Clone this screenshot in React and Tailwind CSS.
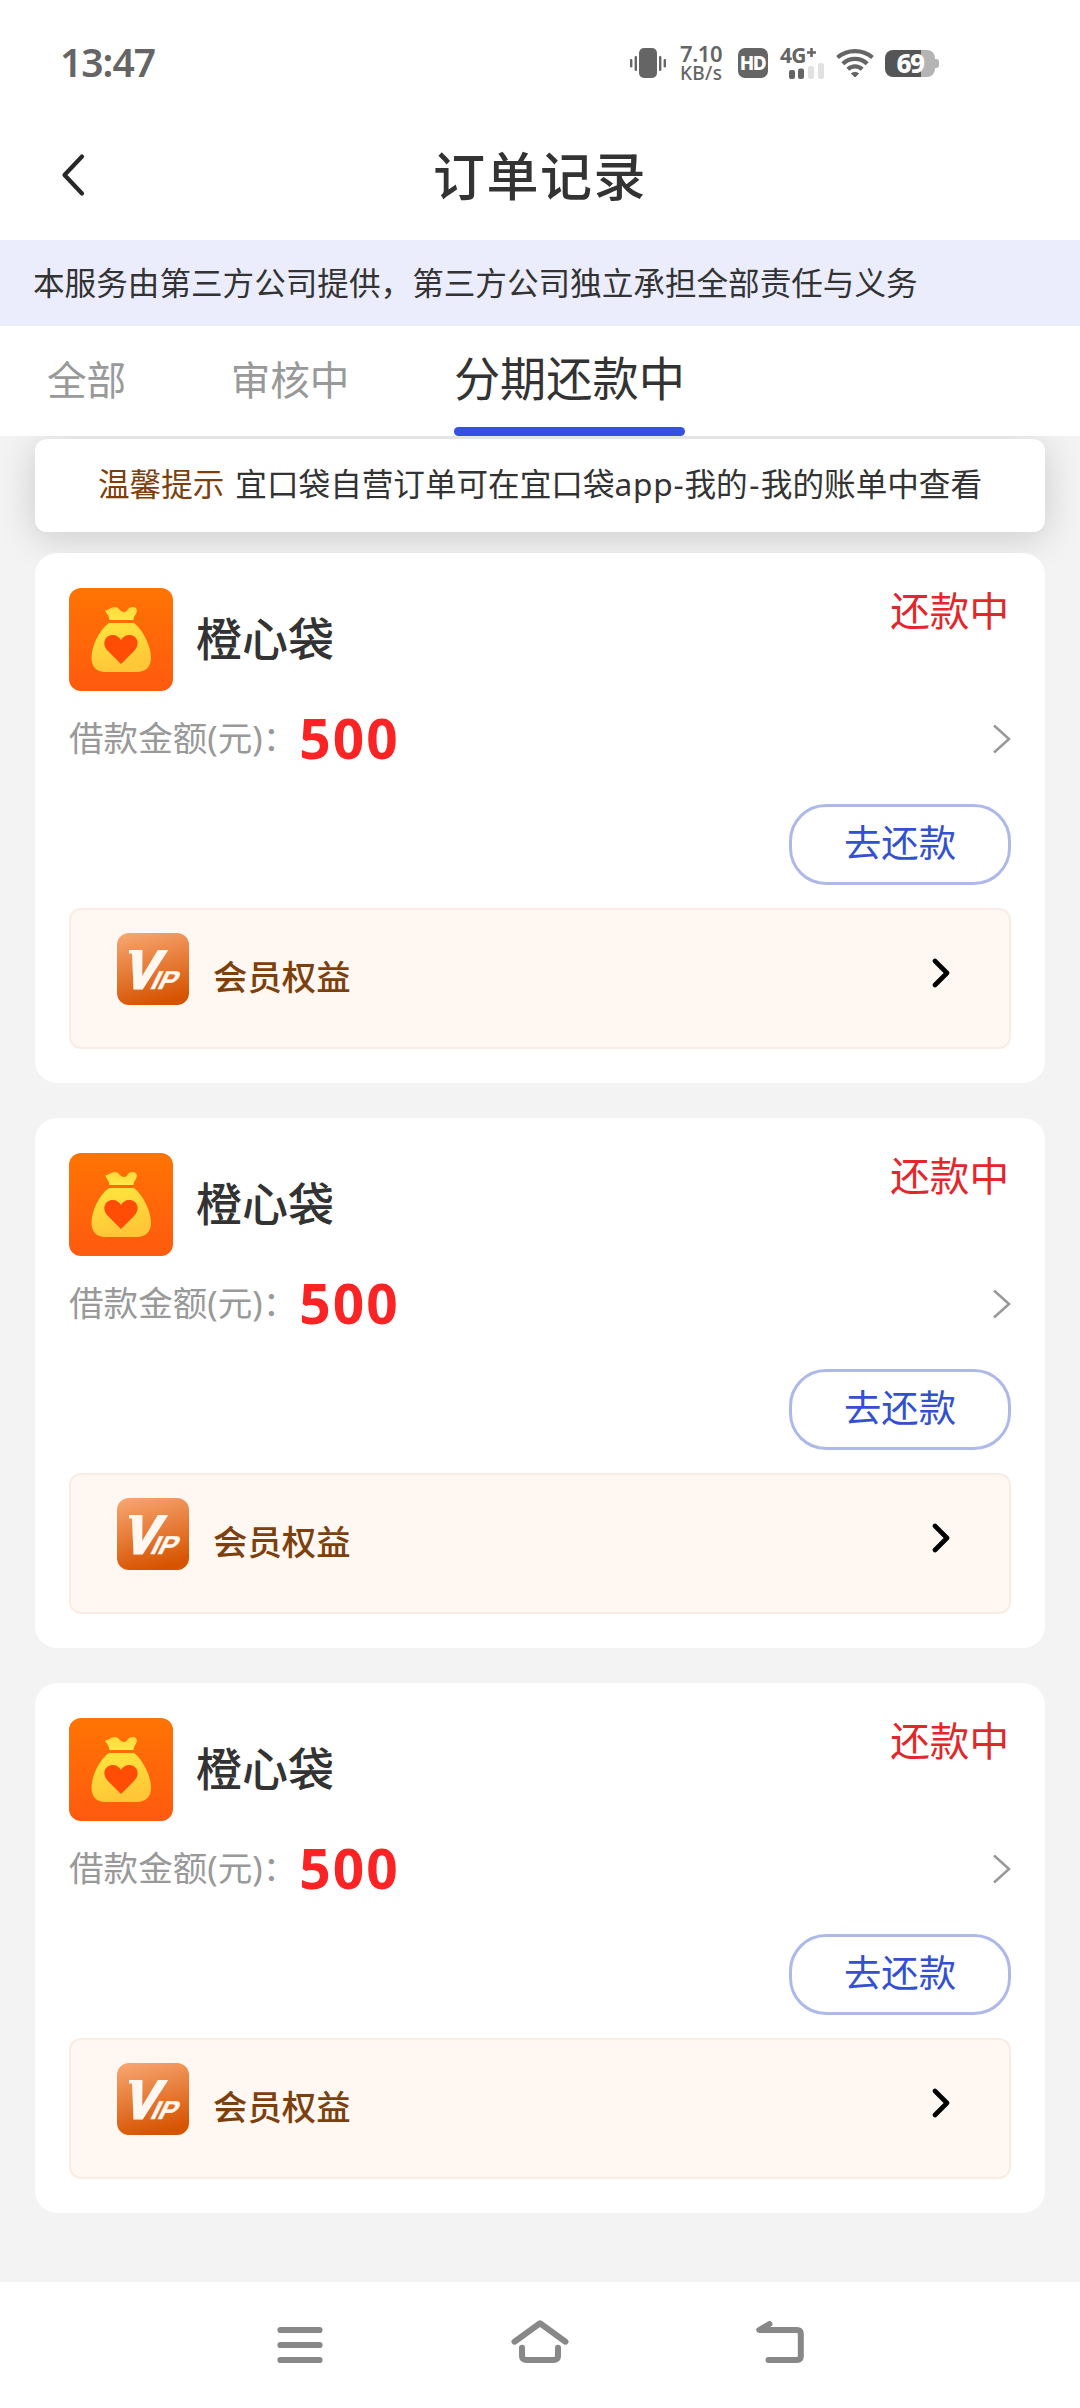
const TABS = [
  { key: 'all', label: '全部' },
  { key: 'review', label: '审核中' },
  { key: 'repaying', label: '分期还款中' },
];

const ORDERS = [
  { id: 1, name: '橙心袋', amount: 500, status: '还款中' },
  { id: 2, name: '橙心袋', amount: 500, status: '还款中' },
  { id: 3, name: '橙心袋', amount: 500, status: '还款中' },
];

const VibrateIcon = () => (
  <svg width="36" height="30" viewBox="0 0 36 30" fill="#656565">
    <rect x="9" y="0" width="18" height="30" rx="5" />
    <rect x="4.6" y="8" width="2.4" height="15" rx="1" />
    <rect x="0" y="11" width="2.4" height="8.5" rx="1" />
    <rect x="29" y="8" width="2.4" height="15" rx="1" />
    <rect x="33.6" y="11" width="2.4" height="8.5" rx="1" />
  </svg>
);

const SignalIcon = () => (
  <svg width="36" height="16" viewBox="0 0 36 16" className="ml-[9px]">
    <rect x="0" y="7" width="6" height="9" rx="2" fill="#656565" />
    <rect x="9" y="5.5" width="6" height="10.5" rx="2" fill="#656565" />
    <rect x="19" y="3" width="6" height="13" rx="2" fill="#e2e2e2" />
    <rect x="29" y="0" width="6" height="16" rx="2" fill="#e2e2e2" />
  </svg>
);

const WifiIcon = () => (
  <svg width="38" height="30" viewBox="0 0 38 30" fill="none" stroke="#656565" strokeWidth="4.200">
    <path d="M1.500 9.500C11.500 1 26.500 1 36.500 9.500" />
    <path d="M6.800 15.800C13.700 9.300 24.300 9.300 31.200 15.800" />
    <path d="M11.800 21.300C16 17.300 22 17.300 26.200 21.300" />
    <path d="M15.300 25.500Q19 23 22.700 25.500L19 29Z" fill="#656565" strokeWidth="1" />
  </svg>
);

const StatusBar = () => (
  <div className="flex h-[126px] items-center justify-between pl-[60px] pr-[141px] text-[#656565]">
    <span className="mb-[3px] text-[39px] leading-none font-semibold tracking-[-1px]">13:47</span>
    <div className="flex items-center">
      <VibrateIcon />
      <div className="ml-[14px] flex w-[46px] flex-col">
        <span className="text-[22px] leading-[20px] font-semibold tracking-[-0.4px]">7.10</span>
        <span className="text-[19px] leading-[20px] font-medium tracking-[0.3px]">KB/s</span>
      </div>
      <div className="ml-[12px] flex size-[30px] items-center justify-center rounded-[7px] bg-[#656565] text-[19px] leading-none font-extrabold tracking-[-1.5px] text-white">
        <span className="pr-[1px]">HD</span>
      </div>
      <div className="ml-[12px] flex w-[45px] flex-col">
        <span className="flex items-start text-[21px] leading-[15px] font-bold tracking-[-0.8px]">
          4G
          <svg width="9" height="9" viewBox="0 0 9 9" className="ml-[1px]" stroke="#656565" strokeWidth="2.600">
            <path d="M4.500 0V9M0 4.500H9" />
          </svg>
        </span>
        <SignalIcon />
      </div>
      <div className="ml-[11px]">
        <WifiIcon />
      </div>
      <div className="ml-[11px] flex items-center">
        <div className="flex h-[27px] w-[50px] items-center justify-center rounded-[8px] bg-linear-to-r from-[#555555] from-72% to-[#b4b4b4] to-72% text-[26px] leading-none font-extrabold tracking-[-1.5px] text-white">
          69
        </div>
        <div className="h-[9px] w-[4px] rounded-r-[3px] bg-[#b4b4b4]" />
      </div>
    </div>
  </div>
);

const TitleBar = () => (
  <div className="grid h-[114px] grid-cols-3 items-start">
    <svg width="24" height="44" viewBox="0 0 24 44" fill="none" className="mt-[27px] ml-[61px]">
      <path d="M21 3.500L3.500 22L21 40.500" stroke="#282828" strokeWidth="4.200" strokeLinecap="round" strokeLinejoin="round" />
    </svg>
    <h1 className="mt-[18px] text-center text-[52px] leading-[64px] font-medium tracking-[1.5px] whitespace-nowrap text-[#333333]">
      订单记录
    </h1>
  </div>
);

const Tabs = ({ active }) => (
  <div className="flex h-[110px] bg-white pl-[47px]">
    {TABS.map(({ key, label }) => (
      <div
        key={key}
        className={
          key === active
            ? 'flex flex-col justify-between pt-[25px] text-[46.2px] leading-[56px] text-[#333333]'
            : 'mr-[104.5px] pt-[26px] text-[39.6px] leading-[56px] text-[#999999]'
        }
      >
        <span>{label}</span>
        {key === active && <div className="h-[9px] rounded-full bg-[#3550e2]" />}
      </div>
    ))}
  </div>
);

const BagLogo = () => (
  <svg width="104" height="103" viewBox="0 0 104 103">
    <defs>
      <linearGradient id="bagBg" x1="0" y1="0" x2="0" y2="1">
        <stop offset="0" stopColor="#ff7403" />
        <stop offset="1" stopColor="#ff5a0f" />
      </linearGradient>
      <linearGradient id="bagFill" x1="0" y1="0" x2="0.3" y2="1">
        <stop offset="0" stopColor="#ffe73e" />
        <stop offset="1" stopColor="#ffc637" />
      </linearGradient>
      <linearGradient id="bagTie" x1="0" y1="0" x2="0" y2="1">
        <stop offset="0" stopColor="#ffd93a" />
        <stop offset="1" stopColor="#ffe948" />
      </linearGradient>
    </defs>
    <rect width="104" height="103" rx="12" fill="url(#bagBg)" />
    <path
      d="M36 22.500C40 22 42 19 46 19C50 19 51 24 55 24C59 24 58 19 64 19C68 19 69 23 66.500 26.500C65 28.500 64.500 30 64.500 32H40.500C40 28 38 26 36 22.500Z"
      fill="url(#bagTie)"
    />
    <path
      d="M40 35H65C74 42 82 58 82 70C82 79 76 84 68 84H36C28 84 22.500 79 22.500 70C22.500 58 30 42 40 35Z"
      fill="url(#bagFill)"
    />
    <path d="M52 76L39 63C32 56 36 47 43.500 47C47.500 47 50.500 49 52 52C53.500 49 56.500 47 60.500 47C68 47 72 56 65 63Z" fill="#ff4d05" />
  </svg>
);

const VipLogo = () => (
  <svg width="72" height="72" viewBox="0 0 72 72">
    <defs>
      <linearGradient id="vipBg" x1="0.25" y1="0" x2="0.5" y2="1">
        <stop offset="0" stopColor="#f6a36d" />
        <stop offset="1" stopColor="#d65300" />
      </linearGradient>
    </defs>
    <rect width="72" height="72" rx="12" fill="url(#vipBg)" />
    <rect x="12" y="17" width="8" height="3.500" fill="#fff7f0" />
    <g fill="#fff7f0" stroke="#fff7f0" fontFamily="Liberation Sans" fontWeight="700">
      <text transform="translate(5 55) skewX(-17)" fontSize="53" textLength="33" lengthAdjust="spacingAndGlyphs" strokeWidth="3">
        V
      </text>
      <text transform="translate(32 55.500) skewX(-26)" fontSize="26" textLength="25" lengthAdjust="spacingAndGlyphs" strokeWidth="0.500">
        IP
      </text>
    </g>
  </svg>
);

const OrderCard = ({ order }) => (
  <div className="h-[530px] rounded-[22px] bg-white px-[34px] pt-[35px]">
    <div className="flex h-[103px] items-start">
      <BagLogo />
      <span className="mt-[27px] ml-[23px] text-[46px] leading-[46px] font-medium text-[#333333]">{order.name}</span>
      <span className="mt-[2px] mr-[2px] ml-auto text-[39.6px] leading-[42px] text-[#e3262b]">{order.status}</span>
    </div>

    <div className="mt-[19px] flex h-[56px] items-center">
      <span className="text-[34.6px] leading-none text-[#999999]">借款金额(元)：</span>
      <span className="mb-[2px] ml-[2px] text-[55px] leading-none font-bold tracking-[2px] text-[#fb2323]">{order.amount}</span>
      <svg width="19" height="30" viewBox="0 0 19 30" fill="none" className="mt-[2px] ml-auto">
        <path d="M2 1.500L17 15L2 28.500" stroke="#999999" strokeWidth="2.600" />
      </svg>
    </div>

    <div className="mt-[38px] flex justify-end">
      <button className="h-[81px] w-[222px] rounded-[37px] border-[3px] border-[#aeb9ea] pb-[3px] text-[37.4px] leading-[70px] text-[#3450d2]">
        去还款
      </button>
    </div>

    {/* Membership entry */}
    <div className="mt-[23px] flex h-[141px] items-start rounded-[12px] border-2 border-[#f9ece4] bg-[#fff7f1] px-[46px] pt-[23px]">
      <VipLogo />
      <span className="mt-[18px] ml-[24px] text-[34.4px] leading-[52px] font-medium text-[#7c400d]">会员权益</span>
      <svg width="20" height="30" viewBox="0 0 20 30" fill="none" className="mt-[25px] mr-[12px] ml-auto">
        <path d="M4 3L16 15L4 27" stroke="#000000" strokeWidth="4.600" strokeLinecap="round" strokeLinejoin="round" />
      </svg>
    </div>
  </div>
);

const NavBar = () => (
  <div className="flex h-[126px] items-start justify-between bg-white px-[276px] pt-[36px]">
    <svg width="48" height="48" viewBox="276 2318 48 48" fill="none" stroke="#888888" strokeWidth="6.200" strokeLinecap="round">
      <path d="M280.500 2330H319.500M280.500 2345H319.500M280.500 2360H319.500" />
    </svg>
    <svg width="60" height="48" viewBox="510 2318 60 48" fill="none" stroke="#888888" strokeWidth="6" strokeLinecap="round" strokeLinejoin="round">
      <path d="M514.500 2341.700L540 2323.200L565.500 2341.700" />
      <path d="M522 2347.700V2356Q522 2360 527 2360H553Q558 2360 558 2356V2347.700" />
    </svg>
    <svg width="48" height="48" viewBox="756 2318 48 48" fill="none" stroke="#888888" strokeWidth="6" strokeLinecap="round" strokeLinejoin="round">
      <path d="M769.500 2324L759.300 2330H797Q800.800 2330 800.800 2334V2356Q800.800 2360 797 2360H768.500" />
    </svg>
  </div>
);

export default function App() {
  return (
    <div className="flex h-[2408px] w-[1080px] flex-col bg-white font-['Noto_Sans','Noto_Sans_CJK_SC',sans-serif]">
      <StatusBar />
      <TitleBar />
      <div className="h-[86px] bg-[#ebedfd] pl-[33px] text-[31.6px] leading-[86px] text-[#333333]">
        本服务由第三方公司提供，第三方公司独立承担全部责任与义务
      </div>
      <Tabs active="repaying" />

      <main className="flex-1 overflow-hidden bg-[#f3f3f3] px-[35px] pt-[3px]">
        <div className="flex h-[93px] items-center justify-center gap-[11px] rounded-[12px] bg-white pb-[3px] text-[31.6px] whitespace-nowrap text-[#333333] shadow-[0_6px_36px_rgba(0,0,0,0.17)]">
          <span className="text-[#7c400d]">温馨提示</span>
          <span>
            宜口袋自营订单可在宜口袋<span className="tracking-[0.8px]">app-</span>我的
            <span className="px-[1.5px]">-</span>我的账单中查看
          </span>
        </div>
        <div className="relative mt-[21px] flex flex-col gap-[35px]">
          {ORDERS.map((order) => (
            <OrderCard key={order.id} order={order} />
          ))}
        </div>
      </main>

      <NavBar />
    </div>
  );
}
